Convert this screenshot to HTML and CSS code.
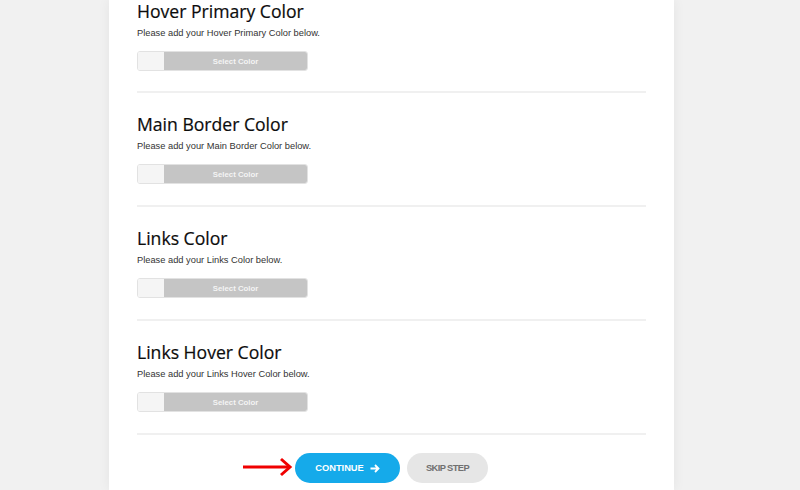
FILE: index.html
```html
<!DOCTYPE html>
<html lang="en">
<head>
<meta charset="utf-8">
<title>Colors</title>
<link rel="stylesheet" href="styles.css">
</head>
<body>
<div class="page">
  <div class="card">
    <div class="section">
      <h2 class="title">Hover Primary Color</h2>
      <p class="desc">Please add your Hover Primary Color below.</p>
      <div class="picker"><span class="swatch"></span><span class="pick-btn">Select Color</span></div>
    </div>
    <div class="section">
      <h2 class="title">Main Border Color</h2>
      <p class="desc">Please add your Main Border Color below.</p>
      <div class="picker"><span class="swatch"></span><span class="pick-btn">Select Color</span></div>
    </div>
    <div class="section">
      <h2 class="title">Links Color</h2>
      <p class="desc">Please add your Links Color below.</p>
      <div class="picker"><span class="swatch"></span><span class="pick-btn">Select Color</span></div>
    </div>
    <div class="section">
      <h2 class="title">Links Hover Color</h2>
      <p class="desc">Please add your Links Hover Color below.</p>
      <div class="picker"><span class="swatch"></span><span class="pick-btn">Select Color</span></div>
    </div>
    <div class="actions">
      <svg class="pointer" width="50" height="20" viewBox="0 0 50 20" aria-hidden="true">
        <path d="M0 10 H45" stroke="#f00000" stroke-width="3" fill="none"/>
        <path d="M38 2 L47 10 L38 18" stroke="#f00000" stroke-width="3" fill="none" stroke-linejoin="miter"/>
      </svg>
      <button class="btn btn-continue">CONTINUE
        <svg class="btn-arrow" width="10" height="9" viewBox="0 0 10 9" aria-hidden="true">
          <path d="M0.5 4.5 H8.5 M5 1 L8.5 4.5 L5 8" stroke="#fff" stroke-width="1.8" fill="none"/>
        </svg>
      </button>
      <button class="btn btn-skip">SKIP STEP</button>
    </div>
  </div>
</div>
</body>
</html>
```

FILE: styles.css
```css
* { box-sizing: border-box; }
html, body { margin: 0; padding: 0; }
body {
  background: #f1f1f1;
  width: 800px;
  height: 490px;
  overflow: hidden;
  font-family: "Liberation Sans", Arial, sans-serif;
}
.page {
  display: flex;
  justify-content: center;
  padding-right: 17px;
}
.card {
  width: 565px;
  height: 490px;
  background: #fff;
  padding: 0 28px;
  box-shadow: 0 0 12px rgba(0,0,0,0.06);
}
.section {
  padding: 20px 0 21px;
  border-bottom: 2px solid #f0f0f0;
}
.section:first-child { padding-top: 0; padding-bottom: 20px; }
.title {
  margin: 0;
  font-family: "Open Sans", sans-serif;
  font-weight: 500;
  font-size: 17.6px;
  line-height: 22px;
  color: #0c0c0c;
  -webkit-text-stroke: 0.2px #0c0c0c;
}
.desc {
  margin: 5px 0 12px;
  font-size: 9.3px;
  line-height: 12px;
  color: #333;
}
.picker {
  display: flex;
  width: 171px;
  height: 20px;
  border: 1px solid #e2e2e2;
  border-radius: 3px;
  overflow: hidden;
}
.swatch {
  width: 26px;
  background: #f5f5f5;
}
.pick-btn {
  flex: 1;
  background: #c5c5c5;
  color: #f4f4f4;
  font-weight: 700;
  font-size: 7.8px;
  display: flex;
  align-items: center;
  justify-content: center;
}
.actions {
  position: relative;
  display: flex;
  justify-content: center;
  gap: 7px;
  padding-top: 18px;
}
.pointer {
  position: absolute;
  left: 106px;
  top: 22px;
}
.btn {
  height: 30px;
  border: none;
  border-radius: 15px;
  font-family: "Liberation Sans", Arial, sans-serif;
  font-weight: 700;
  display: flex;
  align-items: center;
  justify-content: center;
  padding: 0;
}
.btn-continue {
  width: 105px;
  background: #15aaea;
  color: #fff;
  font-size: 9.3px;
  gap: 6px;
}
.btn-skip {
  width: 81px;
  background: #e6e6e6;
  color: #707070;
  font-size: 9.3px;
  letter-spacing: -0.6px;
}
```
